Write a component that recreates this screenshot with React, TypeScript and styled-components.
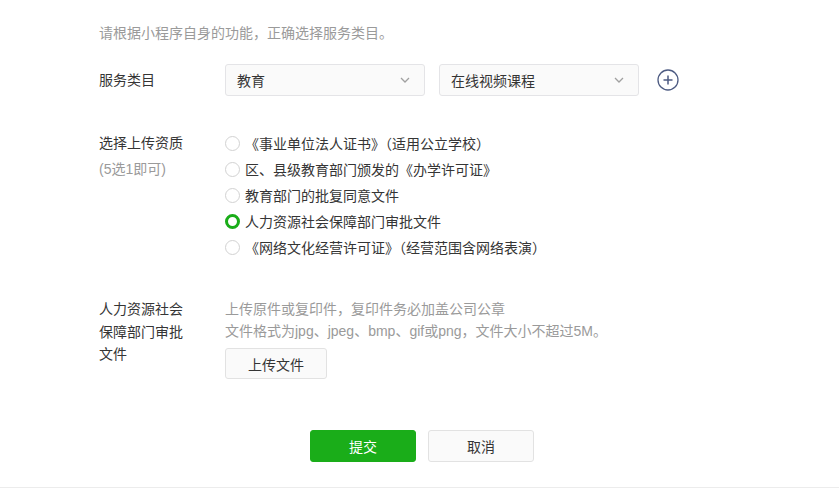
import React, { useState } from 'react'
import styled, { createGlobalStyle } from 'styled-components'

const GlobalStyle = createGlobalStyle`
  html, body {
    margin: 0;
    padding: 0;
    background: #fff;
  }
  body {
    font-family: "Liberation Sans", "Noto Sans CJK SC", sans-serif;
    font-size: 14px;
    color: #353535;
  }
`

const Page = styled.div`
  box-sizing: border-box;
  min-height: 488px;
  padding: 23px 0 0 99px;
  border-bottom: 1px solid #ececec;
`

const Tip = styled.p`
  margin: 0;
  line-height: 20px;
  color: #9a9a9a;
`

const Row = styled.div<{ $top: number }>`
  display: grid;
  grid-template-columns: 126px 1fr;
  margin-top: ${p => p.$top}px;
`

const Label = styled.div<{ $lh: number }>`
  line-height: ${p => p.$lh}px;
  color: #353535;
`

const SubLabel = styled.div`
  color: #9a9a9a;
`

const Selects = styled.div`
  display: flex;
  align-items: center;
  gap: 14px;
`

const Select = styled.div`
  box-sizing: border-box;
  width: 200px;
  height: 32px;
  display: flex;
  align-items: center;
  justify-content: space-between;
  padding: 0 14px 0 11px;
  background: #fafafa;
  border: 1px solid #e4e4e7;
  border-radius: 3px;
  color: #353535;
`

const AddButton = styled.button`
  margin-left: 4px;
  padding: 0;
  width: 22px;
  height: 22px;
  border: none;
  background: none;
  display: flex;
  cursor: pointer;
`

const RadioList = styled.div`
  display: flex;
  flex-direction: column;
`

const RadioItem = styled.label`
  display: flex;
  align-items: center;
  height: 26px;
  gap: 5px;
  cursor: pointer;
`

const Dot = styled.span<{ $on: boolean }>`
  box-sizing: border-box;
  flex: none;
  width: 15px;
  height: 15px;
  border-radius: 50%;
  border: ${p => (p.$on ? '3.5px solid #1aad19' : '1px solid #d2d2d2')};
  background: #fff;
`

const Hints = styled.div`
  line-height: 22px;
  color: #9a9a9a;
`

const GhostButton = styled.button`
  box-sizing: border-box;
  height: 31px;
  padding: 0 22px;
  margin-top: 6px;
  background: #fafafa;
  border: 1px solid #e2e2e2;
  border-radius: 3px;
  font: inherit;
  color: #353535;
  cursor: pointer;
`

const Actions = styled.div`
  display: flex;
  gap: 12px;
  margin: 51px 0 0 211px;
`

const ActionButton = styled.button<{ $primary?: boolean }>`
  box-sizing: border-box;
  width: 106px;
  height: 32px;
  border-radius: 3px;
  font: inherit;
  cursor: pointer;
  background: ${p => (p.$primary ? '#1aad19' : '#fafafa')};
  color: ${p => (p.$primary ? '#fff' : '#353535')};
  border: 1px solid ${p => (p.$primary ? '#1aad19' : '#e2e2e2')};
`

function Chevron() {
  return (
    <svg width="10" height="6" viewBox="0 0 10 6" fill="none">
      <path d="M1 1l4 4 4-4" stroke="#a0a0a0" strokeWidth="1.3" />
    </svg>
  )
}

function PlusCircle() {
  return (
    <svg width="22" height="22" viewBox="0 0 22 22" fill="none">
      <circle cx="11" cy="11" r="10" stroke="#4d5b82" strokeWidth="1.3" />
      <path d="M11 6.5v9M6.5 11h9" stroke="#4d5b82" strokeWidth="1.5" />
    </svg>
  )
}

const options = [
  '《事业单位法人证书》（适用公立学校）',
  '区、县级教育部门颁发的《办学许可证》',
  '教育部门的批复同意文件',
  '人力资源社会保障部门审批文件',
  '《网络文化经营许可证》（经营范围含网络表演）',
]

export default function App() {
  const [picked, setPicked] = useState(3)

  return (
    <>
      <GlobalStyle />
      <Page>
        <Tip>请根据小程序自身的功能，正确选择服务类目。</Tip>

        <Row $top={21}>
          <Label $lh={32}>服务类目</Label>
          <Selects>
            <Select>
              教育
              <Chevron />
            </Select>
            <Select>
              在线视频课程
              <Chevron />
            </Select>
            <AddButton aria-label="添加">
              <PlusCircle />
            </AddButton>
          </Selects>
        </Row>

        <Row $top={34}>
          <Label $lh={26}>
            选择上传资质
            <SubLabel>(5选1即可)</SubLabel>
          </Label>
          <RadioList>
            {options.map((text, i) => (
              <RadioItem key={text} onClick={() => setPicked(i)}>
                <Dot $on={picked === i} />
                {text}
              </RadioItem>
            ))}
          </RadioList>
        </Row>

        <Row $top={38}>
          <Label $lh={22.5}>
            人力资源社会
            <br />
            保障部门审批
            <br />
            文件
          </Label>
          <div>
            <Hints>
              上传原件或复印件，复印件务必加盖公司公章
              <br />
              文件格式为jpg、jpeg、bmp、gif或png，文件大小不超过5M。
            </Hints>
            <GhostButton>上传文件</GhostButton>
          </div>
        </Row>

        <Actions>
          <ActionButton $primary>提交</ActionButton>
          <ActionButton>取消</ActionButton>
        </Actions>
      </Page>
    </>
  )
}
